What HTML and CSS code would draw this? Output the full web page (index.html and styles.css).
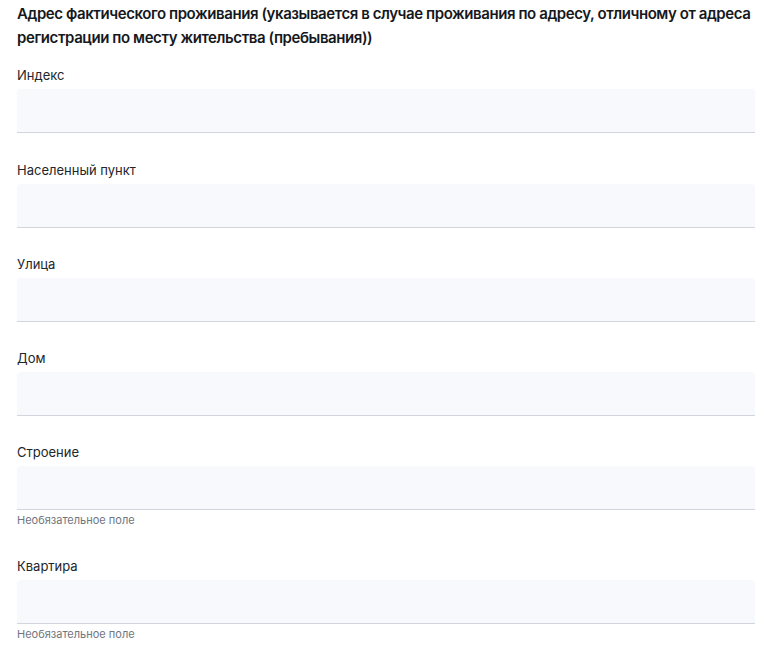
FILE: index.html
```html
<!DOCTYPE html>
<html>
<head>
    <title>Адрес</title>
    <link rel="stylesheet" href="styles.css">
</head>
<body>
    <div class="form">
        <h3 class="title">Адрес фактического проживания (указывается в случае проживания по адресу, отличному от адреса регистрации по месту жительства (пребывания))</h3>

        <div class="field">
            <label class="label">Индекс</label>
            <input class="input" type="text">
        </div>

        <div class="field">
            <label class="label">Населенный пункт</label>
            <input class="input" type="text">
        </div>

        <div class="field">
            <label class="label">Улица</label>
            <input class="input" type="text">
        </div>

        <div class="field">
            <label class="label">Дом</label>
            <input class="input" type="text">
        </div>

        <div class="field">
            <label class="label">Строение</label>
            <input class="input" type="text">
            <div class="hint">Необязательное поле</div>
        </div>

        <div class="field">
            <label class="label">Квартира</label>
            <input class="input" type="text">
            <div class="hint">Необязательное поле</div>
        </div>
    </div>
</body>
</html>
```

FILE: styles.css
```css
body {
    margin: 0;
    background: #ffffff;
    font-family: Inter, "Noto Sans", sans-serif;
    color: #1c1f24;
}

.form {
    display: flex;
    flex-direction: column;
    gap: 27.3px;
    width: 738px;
    padding: 2px 17px 0;
}

.title {
    margin: 0 0 -11px;
    font-size: 15px;
    font-weight: 600;
    line-height: 24px;
    letter-spacing: -0.42px;
    color: #15181c;
}

.field {
    display: flex;
    flex-direction: column;
}

.label {
    font-size: 13px;
    line-height: 18px;
    margin-bottom: 5px;
    color: #22262b;
}

.input {
    box-sizing: border-box;
    height: 44px;
    margin: 0;
    padding: 0 12px;
    border: none;
    border-bottom: 1px solid #d1d5de;
    border-radius: 4px 4px 0 0;
    background: #f8f9fd;
    font-family: inherit;
    font-size: 14px;
    outline: none;
}

.hint {
    margin-top: 2px;
    margin-bottom: 1px;
    font-size: 11px;
    line-height: 16px;
    color: #70757e;
}
```
